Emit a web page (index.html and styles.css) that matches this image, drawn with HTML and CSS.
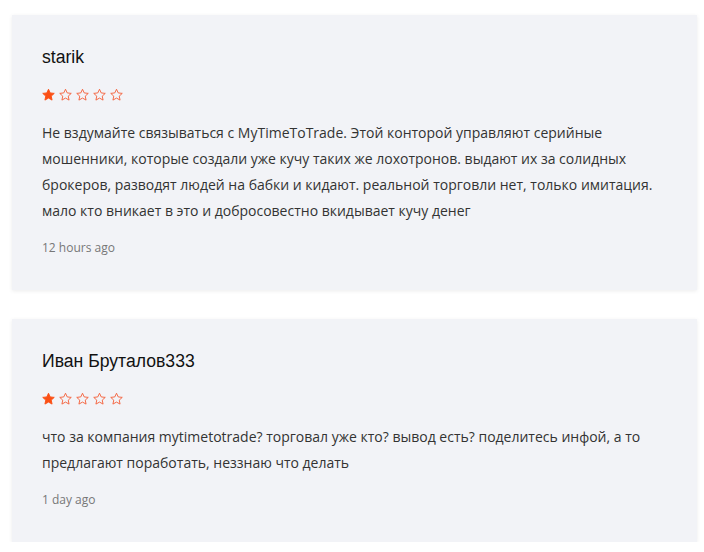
FILE: index.html
```html
<!DOCTYPE html>
<html>
<head>
<meta charset="utf-8">
<link rel="stylesheet" href="styles.css">
</head>
<body>
<svg width="0" height="0" class="defs">
  <defs>
    <path id="star" d="M7 0.8 L8.85 4.75 L13.2 5.25 L9.95 8.2 L10.85 12.5 L7 10.3 L3.15 12.5 L4.05 8.2 L0.8 5.25 L5.15 4.75 Z"/>
  </defs>
</svg>
<div class="list">
  <div class="card">
    <div class="name">starik</div>
    <div class="stars">
      <svg class="star full" viewBox="0 0 14 14"><use href="#star"/></svg>
      <svg class="star" viewBox="0 0 14 14"><use href="#star"/></svg>
      <svg class="star" viewBox="0 0 14 14"><use href="#star"/></svg>
      <svg class="star" viewBox="0 0 14 14"><use href="#star"/></svg>
      <svg class="star" viewBox="0 0 14 14"><use href="#star"/></svg>
    </div>
    <p class="text">Не вздумайте связываться с MyTimeToTrade. Этой конторой управляют серийные мошенники, которые создали уже кучу таких же лохотронов. выдают их за солидных брокеров, разводят людей на бабки и кидают. реальной торговли нет, только имитация. мало кто вникает в это и добросовестно вкидывает кучу денег</p>
    <div class="time">12 hours ago</div>
  </div>
  <div class="card">
    <div class="name">Иван Бруталов333</div>
    <div class="stars">
      <svg class="star full" viewBox="0 0 14 14"><use href="#star"/></svg>
      <svg class="star" viewBox="0 0 14 14"><use href="#star"/></svg>
      <svg class="star" viewBox="0 0 14 14"><use href="#star"/></svg>
      <svg class="star" viewBox="0 0 14 14"><use href="#star"/></svg>
      <svg class="star" viewBox="0 0 14 14"><use href="#star"/></svg>
    </div>
    <p class="text">что за компания mytimetotrade? торговал уже кто? вывод есть? поделитесь инфой, а то предлагают поработать, неззнаю что делать</p>
    <div class="time">1 day ago</div>
  </div>
</div>
</body>
</html>
```
FILE: styles.css
```css
html, body {
  margin: 0;
  padding: 0;
  background: #ffffff;
}
.defs {
  position: absolute;
}
.list {
  display: flex;
  flex-direction: column;
  gap: 29px;
  padding: 15px 7px 0 12px;
}
.card {
  background: #f2f3f7;
  box-shadow: 0 1px 4px rgba(0, 0, 0, 0.08);
  padding: 30px 30px 33px 30px;
}
.name {
  font-family: "Liberation Sans", Arial, sans-serif;
  font-size: 17.6px;
  line-height: 24px;
  color: #111111;
}
.stars {
  display: flex;
  gap: 4px;
  margin-top: 19px;
  height: 14px;
}
.star {
  width: 13px;
  height: 14px;
  fill: none;
  stroke: #f4603a;
  stroke-width: 1;
}
.star.full {
  fill: #fb4f14;
  stroke: #fb4f14;
}
.text {
  margin: 18px 0 0 0;
  font-family: "Open Sans", sans-serif;
  font-size: 14px;
  line-height: 26px;
  color: #333333;
}
.time {
  margin-top: 15px;
  font-family: "Open Sans", sans-serif;
  font-size: 12px;
  line-height: 18px;
  color: #777777;
}
```
